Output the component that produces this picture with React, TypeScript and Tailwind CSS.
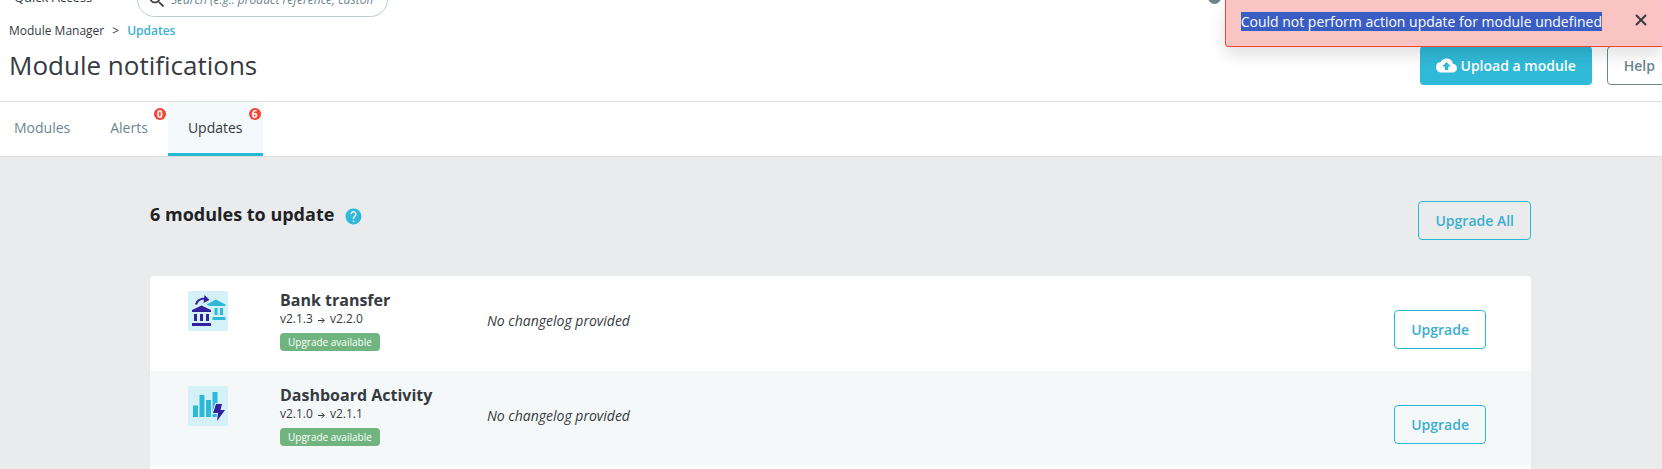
import { MdCloudUpload, MdHelp, MdSearch } from 'react-icons/md'

const TABS = [
  { label: 'Modules', count: null, active: false },
  { label: 'Alerts', count: 0, active: false },
  { label: 'Updates', count: 6, active: true },
]

const MODULES = [
  { name: 'Bank transfer', from: 'v2.1.3', to: 'v2.2.0', Logo: BankLogo },
  { name: 'Dashboard Activity', from: 'v2.1.0', to: 'v2.1.1', Logo: ActivityLogo },
]

function BankLogo() {
  return (
    <svg width="40" height="40" viewBox="0 0 40 40" aria-hidden="true">
      <rect width="40" height="40" rx="2" fill="#d4f1f8" />
      <g fill="#34219e">
        <path d="M4 19 13.500 14.500 23 19V21H4z" />
        <path d="M6 23h3v7H6zM12 23h3v7h-3zM18 23h3v7h-3zM4 32h19v3H4z" />
        <path d="M16.500 4 21.500 9l-6 3z" />
      </g>
      <path d="M8 13.500C9 9 12 7.500 17.500 7.500" fill="none" stroke="#34219e" strokeWidth="2.200" />
      <g fill="#2fb9d8">
        <path d="M18.500 13.500 28 8.500 37.500 13.500V15h-16z" />
        <path d="M26.500 17h3v7h-3zM32 17h3v7h-3zM24.500 26h13v3h-13z" />
      </g>
    </svg>
  )
}

function ActivityLogo() {
  return (
    <svg width="40" height="40" viewBox="0 0 40 40" aria-hidden="true">
      <rect width="40" height="40" rx="2" fill="#d4f1f8" />
      <path d="M5 19.500h5V31H5zM11.500 9h5v22h-5zM18 14h5v17h-5zM24.500 6h5v25h-5z" fill="#2fb9d8" />
      <path
        d="M28 18h6l-1.500 6H37l-8 11 1-8h-5z"
        fill="#34219e"
        stroke="#d4f1f8"
        strokeWidth="2"
        paintOrder="stroke"
      />
    </svg>
  )
}

function Arrow() {
  return (
    <svg width="7" height="7" viewBox="0 0 7 7" fill="none" stroke="currentColor" className="mt-[2px]" aria-label="to">
      <path d="M0 3.500h6M3.500 .8 6.200 3.500 3.500 6.200" />
    </svg>
  )
}

function OutlineButton({ children }: { children: string }) {
  return (
    <button className="h-[39px] rounded-sm border border-[#25b9d7] px-4 text-sm font-semibold text-[#3aafd0]">
      {children}
    </button>
  )
}

function Toast() {
  return (
    <div
      role="alert"
      className="absolute top-0 right-0 flex h-[47px] items-start rounded-bl border-b border-l border-[#f44336] bg-[#f9c4c1] pt-3 pl-[15px] shadow-[0_8px_16px_rgba(0,0,0,0.12)]"
    >
      <span className="bg-[#3a5dc4] text-sm leading-[19px] text-white">
        Could not perform action update for module undefined
      </span>
      <button aria-label="Close" className="mr-3 ml-[30px] text-[#363a41]">
        <svg width="18" height="18" viewBox="0 0 18 18" stroke="currentColor" strokeWidth="2" aria-hidden="true">
          <path d="M4 3 14 13M14 3 4 13" />
        </svg>
      </button>
    </div>
  )
}

export default function App() {
  return (
    <div className="relative min-h-screen overflow-hidden bg-[#e9ebec] font-['Open_Sans','Liberation_Sans',sans-serif] text-[#363a41]">
      <header className="border-b border-[#dddddd] bg-white">
        <div className="flex h-[17px] items-end overflow-hidden">
          <button className="mb-[10px] ml-[14px] w-[123px] text-left text-[13px] leading-5">Quick Access</button>
          <label className="flex h-[35px] w-[251px] shrink-0 items-center gap-1 rounded-full border border-[#bbcdd2] pl-[9px]">
            <MdSearch size={20} className="shrink-0 text-[#363a41]" />
            <input
              aria-label="Search"
              placeholder="Search (e.g.: product reference, custom"
              className="mr-[14px] min-w-0 flex-1 text-xs italic placeholder:text-[#6c868e]"
            />
          </label>
          <span className="mb-[13px] ml-auto mr-[441px] size-[13px] rounded-full bg-[#6c868e]" />
        </div>

        <nav aria-label="Breadcrumb" className="mt-1 flex gap-2 pl-[9px] text-xs leading-5">
          <a href="#modules">Module Manager</a>
          <span>&gt;</span>
          <a href="#updates" className="font-semibold text-[#3aafd0]">Updates</a>
        </nav>

        <div className="flex h-[60px] items-start justify-between pl-[9px]">
          <h1 className="pt-2 text-[26px] leading-8">Module notifications</h1>
          <div className="-mr-[10px] flex gap-[15px] pt-[5px]">
            <button className="flex h-[39px] items-center gap-1 rounded-sm bg-[#30bad8] px-4 text-sm font-semibold text-white">
              <MdCloudUpload size={21} />
              Upload a module
            </button>
            <button className="h-[39px] rounded-sm border border-[#6c868e] px-4 text-sm font-semibold text-[#6c868e]">
              Help
            </button>
          </div>
        </div>
      </header>

      <nav aria-label="Sections" className="flex border-b border-[#dddddd] bg-white">
        {TABS.map(({ label, count, active }) => (
          <a
            key={label}
            href={`#${label.toLowerCase()}`}
            className={`relative h-[54px] border-b-3 px-5 pt-4 text-sm leading-5 first:pl-[14px] ${
              active ? 'border-[#25b9d7] bg-[#f4f9fc]' : 'border-transparent text-[#6c868e]'
            }`}
          >
            {label}
            {count !== null && (
              <span className="absolute top-[6px] right-[2px] flex size-3 items-center justify-center rounded-full bg-[#f44336] text-[10px] font-bold text-white">
                {count}
              </span>
            )}
          </a>
        ))}
      </nav>

      <main className="pt-11 pr-[131px] pl-[150px]">
        <div className="flex items-start justify-between">
          <h2 className="flex items-center gap-[10px] text-lg leading-[26px] font-bold text-[#202124]">
            6 modules to update
            <MdHelp size={19} className="mt-1 text-[#2fb9d8]" />
          </h2>
          <OutlineButton>Upgrade All</OutlineButton>
        </div>

        <ul className="mt-9 rounded-t bg-white">
          {MODULES.map(({ name, from, to, Logo }) => (
            <li key={name} className="flex h-[95px] pr-[45px] pl-[38px] even:bg-[#f4f8f9]">
              <div className="w-[92px] pt-[15px]">
                <Logo />
              </div>
              <div className="w-[207px] pt-[13px]">
                <h3 className="text-base leading-[22px] font-bold">{name}</h3>
                <p className="flex items-center gap-[5px] text-xs leading-4">
                  {from}
                  <Arrow />
                  {to}
                </p>
                <span className="mt-[6px] block w-fit rounded bg-[#70b580] px-2 text-[10px] leading-[18px] font-medium text-white">
                  Upgrade available
                </span>
              </div>
              <p className="flex-1 pt-[35px] text-sm leading-5 italic">No changelog provided</p>
              <div className="pt-[34px]">
                <OutlineButton>Upgrade</OutlineButton>
              </div>
            </li>
          ))}
          <li className="h-4" />
        </ul>
      </main>

      <Toast />
    </div>
  )
}
